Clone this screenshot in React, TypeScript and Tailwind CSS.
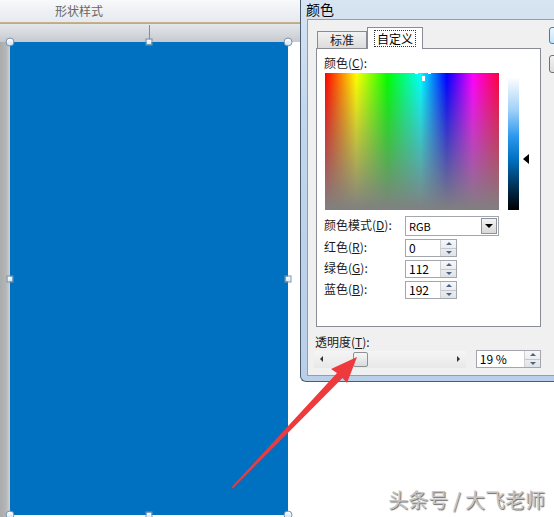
import React from 'react';

const cjk = "font-['Noto_Sans_CJK_SC','Liberation_Sans',sans-serif]";

function Handle({ pos, round }: { pos: string; round?: boolean }) {
  return (
    <div
      className={
        'absolute -translate-x-1/2 -translate-y-1/2 border border-[#7d93aa] ' +
        (round
          ? 'w-[9px] h-[9px] rounded-full bg-[linear-gradient(to_bottom,#ffffff,#cfe3f3)] '
          : 'w-[7px] h-[7px] bg-[linear-gradient(to_bottom,#ffffff,#d6e8f6)] ') +
        pos
      }
    />
  );
}

function Spin() {
  return (
    <div className="w-[16px] h-full flex flex-col border-l border-[#d0d0d0] bg-[linear-gradient(to_bottom,#f6f7f9,#dfe3e8)]">
      <div className="flex-1 flex items-center justify-center border-b border-[#c4c8ce]">
        <div className="w-0 h-0 border-l-[3px] border-r-[3px] border-b-[3px] border-l-transparent border-r-transparent border-b-[#4f6382]" />
      </div>
      <div className="flex-1 flex items-center justify-center">
        <div className="w-0 h-0 border-l-[3px] border-r-[3px] border-t-[3px] border-l-transparent border-r-transparent border-t-[#4f6382]" />
      </div>
    </div>
  );
}

function NumField({ label, hot, value }: { label: string; hot: string; value: string }) {
  return (
    <div className="flex items-center h-[18px] mt-[3px]">
      <div className="w-[81px] text-[12px] leading-[14px] text-[#1a1a1a] -mt-[2px]">
        {label}(<span className="underline">{hot}</span>):
      </div>
      <div className="w-[52px] h-[18px] flex border border-[#a3a6ac] bg-white">
        <div className="flex-1 pl-[3px] text-[12px] leading-[16px] text-black">{value}</div>
        <Spin />
      </div>
    </div>
  );
}

function ColorTab() {
  return (
    <div className="w-[225px] h-[279px] border border-[#898c95] bg-white pl-[7px] pt-[7px]">
      <div className="text-[12px] leading-[14px] text-[#1a1a1a]">
        颜色(<span className="underline">C</span>):
      </div>
      <div className="flex mt-[3px] ml-[1px]">
        <div className="relative w-[174px] h-[137px] bg-[linear-gradient(to_bottom,rgba(128,128,128,0),rgba(128,128,128,0.55)_55%,#808080),linear-gradient(to_right,#ff0000,#ffff00_18%,#00ff00_36%,#00ffff_55%,#0000ff_70%,#ff00ff_85%,#ff0040)]">
          <div className="absolute left-[97px] top-[3px] w-[3px] h-[5px] bg-white" />
          <div className="absolute left-[90px] top-0 w-[3px] h-[1px] bg-white" />
          <div className="absolute left-[103px] top-0 w-[3px] h-[1px] bg-white" />
        </div>
        <div className="relative ml-[9px] mt-[4px] w-[11px] h-[133px] bg-[linear-gradient(to_bottom,#ffffff,#9fd0f8_25%,#2b97ee_45%,#0070c0_62%,#00213a_88%,#000000)]">
          <div className="absolute left-[15px] top-[77px] w-0 h-0 border-t-[5px] border-b-[5px] border-r-[6px] border-t-transparent border-b-transparent border-r-black" />
        </div>
      </div>
      <div className="flex items-center h-[20px] mt-[6px]">
        <div className="w-[81px] text-[12px] leading-[14px] text-[#1a1a1a] -mt-[2px]">
          颜色模式(<span className="underline">D</span>):
        </div>
        <div className="w-[94px] h-[20px] flex border border-[#a3a6ac] bg-white">
          <div className="flex-1 pl-[3px] text-[11px] leading-[18px] text-black">RGB</div>
          <div className="w-[16px] m-[1px] flex items-center justify-center border border-[#8e9299] bg-[linear-gradient(to_bottom,#f3f3f3,#d8d8d8)]">
            <div className="w-0 h-0 border-l-[4px] border-r-[4px] border-t-[4px] border-l-transparent border-r-transparent border-t-black" />
          </div>
        </div>
      </div>
      <NumField label="红色" hot="R" value="0" />
      <NumField label="绿色" hot="G" value="112" />
      <NumField label="蓝色" hot="B" value="192" />
    </div>
  );
}

function Dialog() {
  return (
    <div className="w-[300px] h-[382px] flex flex-col border-l border-b border-[#4c5d73] rounded-bl-[6px] bg-[linear-gradient(to_bottom,#d7e4f2,#c2d6ec_30%,#b9cfe8)]">
      <div className="h-[19px] pl-[5px] text-[14px] leading-[19px] text-black">颜色</div>
      <div className="flex-1 ml-[6px] mb-[5px] border border-[#8a9fb8] bg-[#f0f0f0] pl-[8px] pt-[7px] flex">
        <div className="w-[225px] flex flex-col">
          <div className="flex items-end h-[21px] pl-[1px]">
            <div className="w-[50px] h-[17px] border border-b-0 border-[#898c95] bg-[linear-gradient(to_bottom,#f2f2f2,#dcdcdc)] text-[12px] leading-[16px] text-center text-[#1a1a1a]">
              标准
            </div>
            <div className="relative z-10 -mb-px w-[56px] h-[22px] border border-b-0 border-[#898c95] bg-white flex items-center justify-center">
              <span className="px-[2px] text-[12px] leading-[15px] text-black outline outline-1 outline-dotted outline-[#333]">
                自定义
              </span>
            </div>
          </div>
          <ColorTab />
          <div className="mt-[8px] -ml-[1px] text-[12px] leading-[14px] text-[#1a1a1a]">
            透明度(<span className="underline">T</span>):
          </div>
          <div className="flex items-center mt-[1px] -ml-[2px]">
            <div className="relative w-[156px] h-[17px] flex items-center justify-between px-[6px] bg-[linear-gradient(to_bottom,#f5f5f5,#e8e8e8)]">
              <div className="w-0 h-0 border-t-[3px] border-b-[3px] border-r-[3px] border-t-transparent border-b-transparent border-r-[#333]" />
              <div className="w-0 h-0 border-t-[3px] border-b-[3px] border-l-[3px] border-t-transparent border-b-transparent border-l-[#333]" />
              <div className="absolute left-[39px] top-[1px] w-[15px] h-[15px] rounded-[2px] border border-[#8d9095] bg-[linear-gradient(to_bottom,#f7f7f7,#d9dadc)]" />
            </div>
            <div className="ml-[10px] w-[67px] h-[18px] flex border border-[#a3a6ac] bg-white">
              <div className="flex-1 pl-[3px] text-[12px] leading-[16px] text-black">19 %</div>
              <Spin />
            </div>
          </div>
        </div>
        <div className="ml-[8px] flex flex-col">
          <div className="w-[75px] h-[17px] rounded-[3px] border border-[#3c7fb1] bg-[linear-gradient(to_bottom,#eaf6fd,#bee6fd)]" />
          <div className="mt-[11px] w-[75px] h-[18px] rounded-[3px] border border-[#707070] bg-[linear-gradient(to_bottom,#f2f2f2,#dddddd)]" />
        </div>
      </div>
    </div>
  );
}

export default function App() {
  return (
    <div className={'relative w-[554px] h-[517px] overflow-hidden flex bg-white ' + cjk}>
      {/* PowerPoint side */}
      <div className="w-[300px] flex flex-col">
        <div className="h-[22px] pl-[55px] bg-[linear-gradient(to_bottom,#f7f9fb,#e6e9ee)] text-[12px] leading-[22px] text-[#666]">
          形状样式
        </div>
        <div className="h-[2px] bg-[linear-gradient(to_bottom,#cdb792,#b7a486)]" />
        <div className="h-[18px] bg-[linear-gradient(to_bottom,#e4e7ea,#c6cacf)]" />
        <div className="flex-1 flex">
          <div className="w-[10px] bg-[linear-gradient(to_right,#a9abad,#b3b5b7_60%,#cfd1d3)]" />
          <div className="relative w-[278px] h-[473px] bg-[#0070c0]">
            <div className="absolute left-[139px] -top-[17px] w-px h-[17px] bg-[#7f8e9c]" />
            <Handle pos="left-0 top-0" round />
            <Handle pos="left-[139px] top-0" />
            <Handle pos="left-full top-0" round />
            <Handle pos="left-0 top-[237px]" />
            <Handle pos="left-full top-[237px]" />
            <Handle pos="left-0 top-full" round />
            <Handle pos="left-[139px] top-full" />
            <Handle pos="left-full top-full" round />
          </div>
          <div className="flex-1 bg-white" />
        </div>
      </div>

      {/* dialog side */}
      <div className="w-[254px] flex flex-col overflow-hidden">
        <Dialog />
        <div className="flex-1 flex items-end justify-end pr-[9px] pb-[6px]">
          <span className="text-[20px] leading-[22px] text-[#c4c4c4] [text-shadow:1px_1px_1px_#6a6a6a]">
            头条号 / 大飞老师
          </span>
        </div>
      </div>

      {/* red arrow */}
      <svg className="absolute inset-0 pointer-events-none" width="554" height="517" viewBox="0 0 554 517">
        <polygon
          points="357,357 347,383 342.5,378 232.6,488.6 231.4,487.4 337,373 331,369"
          fill="#ee3a3c"
        />
      </svg>
    </div>
  );
}
